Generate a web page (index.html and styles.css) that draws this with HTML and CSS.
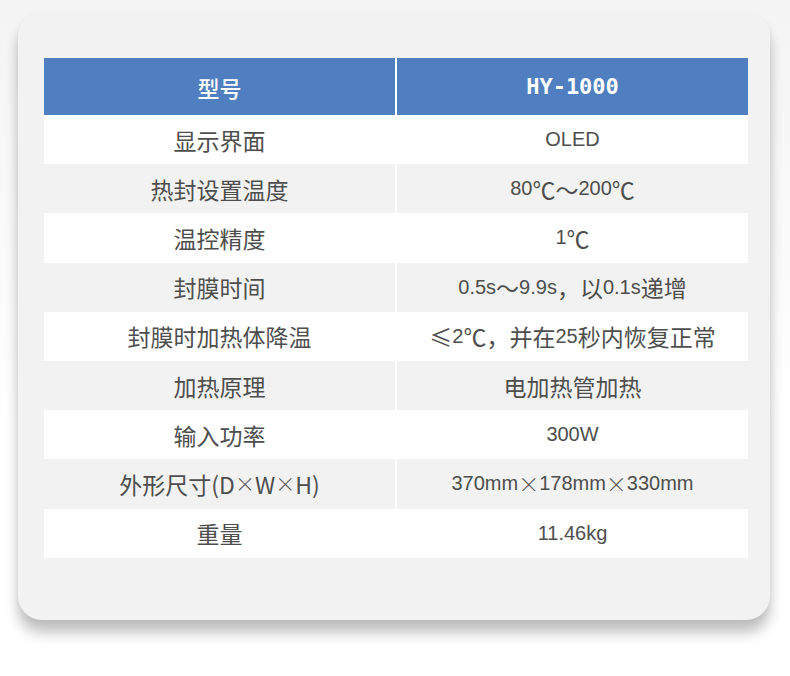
FILE: index.html
```html
<!DOCTYPE html>
<html lang="zh-CN">
<head>
<meta charset="utf-8">
<title>HY-1000 参数</title>
<link rel="stylesheet" href="styles.css">
</head>
<body>
<div class="page">
  <div class="card">
    <div class="spec">
      <div class="cell head">型号</div>
      <div class="cell head model">HY-1000</div>

      <div class="cell key">显示界面</div>
      <div class="cell val">OLED</div>

      <div class="cell key alt">热封设置温度</div>
      <div class="cell val alt">80<span class="cjk">℃～</span>200<span class="cjk">℃</span></div>

      <div class="cell key">温控精度</div>
      <div class="cell val">1<span class="cjk">℃</span></div>

      <div class="cell key alt">封膜时间</div>
      <div class="cell val alt">0.5s<span class="cjk">～</span>9.9s<span class="cjk">，以</span>0.1s<span class="cjk">递增</span></div>

      <div class="cell key">封膜时加热体降温</div>
      <div class="cell val"><span class="cjk">≤</span>2<span class="cjk">℃，并在</span>25<span class="cjk">秒内恢复正常</span></div>

      <div class="cell key alt">加热原理</div>
      <div class="cell val alt cjk">电加热管加热</div>

      <div class="cell key">输入功率</div>
      <div class="cell val">300W</div>

      <div class="cell key alt">外形尺寸(D<span class="times">×</span>W<span class="times">×</span>H)</div>
      <div class="cell val alt">370mm<span class="times">×</span>178mm<span class="times">×</span>330mm</div>

      <div class="cell key">重量</div>
      <div class="cell val">11.46kg</div>
    </div>
  </div>
</div>
</body>
</html>
```
FILE: styles.css
```css
html, body {
  margin: 0;
  padding: 0;
}
body {
  width: 790px;
  height: 676px;
  overflow: hidden;
  background: linear-gradient(#f4f4f4 0, #f7f7f7 120px, #ffffff 420px);
  font-family: "Liberation Sans", "Noto Sans CJK SC", sans-serif;
}
.page {
  padding: 12px 20px 0 18px;
}
.card {
  box-sizing: border-box;
  width: 752px;
  height: 608px;
  border-radius: 24px;
  background: #f2f2f2;
  padding: 46px 22px 0 26px;
  box-shadow: 0 13px 13px rgba(0, 0, 0, 0.24), 0 2px 6px rgba(0, 0, 0, 0.05);
}
.spec {
  display: grid;
  grid-template-columns: 351px 351px;
  grid-template-rows: 57px repeat(9, 49.2px);
  column-gap: 2px;
  background: #ffffff;
}
.cell {
  display: flex;
  align-items: center;
  justify-content: center;
  background: #ffffff;
  color: #4e4e4e;
  white-space: nowrap;
}
.cell.alt {
  background: #f2f2f2;
}
.head {
  background: #4f7fc0;
  color: #ffffff;
  font-family: "Noto Sans CJK SC", sans-serif;
  font-size: 22px;
  font-weight: 500;
}
.head.model {
  font-family: "DejaVu Sans Mono", monospace;
  font-size: 22px;
  font-weight: bold;
}
.key {
  font-family: "Noto Sans CJK SC", sans-serif;
  font-size: 23px;
}
.val {
  font-size: 20px;
}
.cjk {
  font-family: "Noto Sans CJK SC", sans-serif;
  font-size: 23px;
}
.val.cjk {
  font-size: 23px;
}
.times {
  font-family: "Noto Sans CJK SC", sans-serif;
  font-weight: 300;
  line-height: 1;
}
.key .times {
  font-size: 20px;
}
.val .times {
  font-size: 21px;
}
```
